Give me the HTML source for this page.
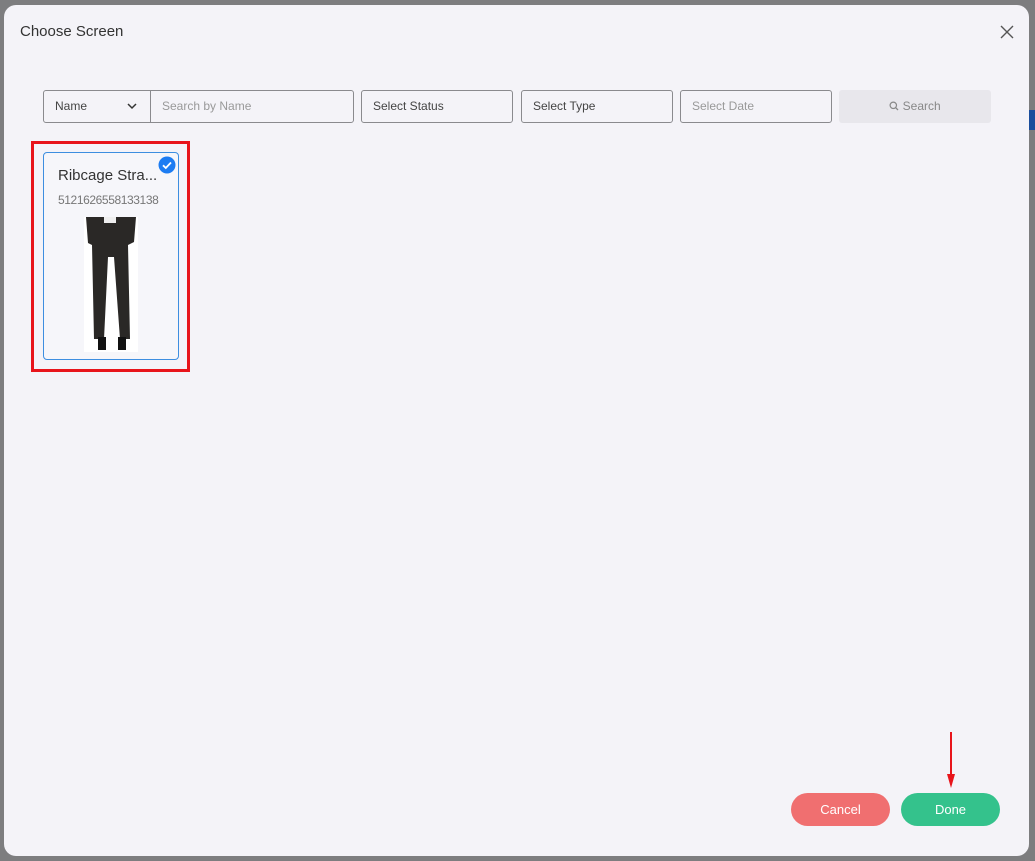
<!DOCTYPE html>
<html><head><style>
*{box-sizing:border-box;margin:0;padding:0}
body{width:1035px;height:861px;background:#7d7d7f;font-family:"Liberation Sans",sans-serif;position:relative;overflow:hidden}
.modal{position:absolute;left:4px;top:5px;width:1025px;height:851px;background:#f4f3f8;border-radius:12px}
.title{position:absolute;left:16px;top:18px;font-size:15px;color:#333}
.x{position:absolute;left:996px;top:20px}
.inp{position:absolute;top:85px;height:33px;border:1px solid #8a8a8e;border-radius:3px;font-size:12px;color:#555;padding-left:11px;line-height:31px}
.ph{color:#999}
.btn{position:absolute;top:788px;width:99px;height:33px;border-radius:17px;color:#fff;font-size:13px;text-align:center;line-height:33px}
</style></head><body>
<div style="position:absolute;left:1029px;top:110px;width:6px;height:20px;background:#1a4d9c"></div>
<div class="modal">
<div class="title">Choose Screen</div>
<svg class="x" width="14" height="14" viewBox="0 0 14 14"><path d="M1 1L13 13M13 1L1 13" stroke="#555" stroke-width="1.4"/></svg>
<div class="inp" style="left:39px;width:311px;padding:0">
 <div style="position:absolute;left:0;top:0;width:107px;height:31px;border-right:1px solid #8a8a8e;padding-left:11px;color:#444">Name
 <svg style="position:absolute;left:83px;top:12px" width="10" height="7" viewBox="0 0 10 7"><path d="M1 1L5 5L9 1" stroke="#333" stroke-width="1.5" fill="none"/></svg></div>
 <div class="ph" style="position:absolute;left:118px;top:0">Search by Name</div>
</div>
<div class="inp" style="left:357px;width:152px;color:#444">Select Status</div>
<div class="inp" style="left:517px;width:152px;color:#444">Select Type</div>
<div class="inp ph" style="left:676px;width:152px">Select Date</div>
<div style="position:absolute;left:835px;top:85px;width:152px;height:33px;background:#e8e7ec;border-radius:3px;font-size:12px;color:#888;text-align:center;line-height:33px">
<svg width="10" height="10" viewBox="0 0 10 10" style="vertical-align:-1px"><circle cx="4.3" cy="4.3" r="3.2" stroke="#888" stroke-width="1.2" fill="none"/><path d="M6.6 6.6L9 9" stroke="#888" stroke-width="1.3"/></svg> Search</div>
<div style="position:absolute;left:27px;top:136px;width:159px;height:231px;border:3px solid #e8141b"></div>
<div style="position:absolute;left:39px;top:147px;width:136px;height:208px;border:1px solid #3d8ee0;border-radius:4px;background:#f6f6fa">
 <div style="position:absolute;left:14px;top:14px;font-size:15px;color:#333">Ribcage Stra...</div>
 <div style="position:absolute;left:14px;top:40px;font-size:12px;color:#777;letter-spacing:-0.4px">5121626558133138</div>
 <svg style="position:absolute;left:114px;top:3px" width="18" height="18" viewBox="0 0 18 18"><circle cx="9" cy="9" r="8.5" fill="#1d7cf2"/><path d="M5 9.3L7.8 12L13 6.5" stroke="#fff" stroke-width="1.8" fill="none"/></svg>
 <div style="position:absolute;left:40px;top:64px;width:54px;height:135px;background:#fff">
  <svg width="54" height="135" viewBox="0 0 54 135"><path d="M2 0H52L50 25L44 28L46 122H36L30 40L24 40L20 122H10L8 28L4 26Z" fill="#2a2826"/><rect x="14" y="120" width="8" height="13" fill="#111"/><rect x="34" y="120" width="8" height="13" fill="#111"/><rect x="20" y="0" width="12" height="6" fill="#eee"/></svg>
 </div>
</div>
<div class="btn" style="left:787px;background:#f06f70">Cancel</div>
<div class="btn" style="left:897px;background:#34c28c">Done</div>
<svg style="position:absolute;left:942px;top:727px" width="10" height="56" viewBox="0 0 10 56"><path d="M5 0V44" stroke="#e8141b" stroke-width="2"/><path d="M1 42L5 56L9 42Z" fill="#e8141b"/></svg>
</div>
</body></html>
